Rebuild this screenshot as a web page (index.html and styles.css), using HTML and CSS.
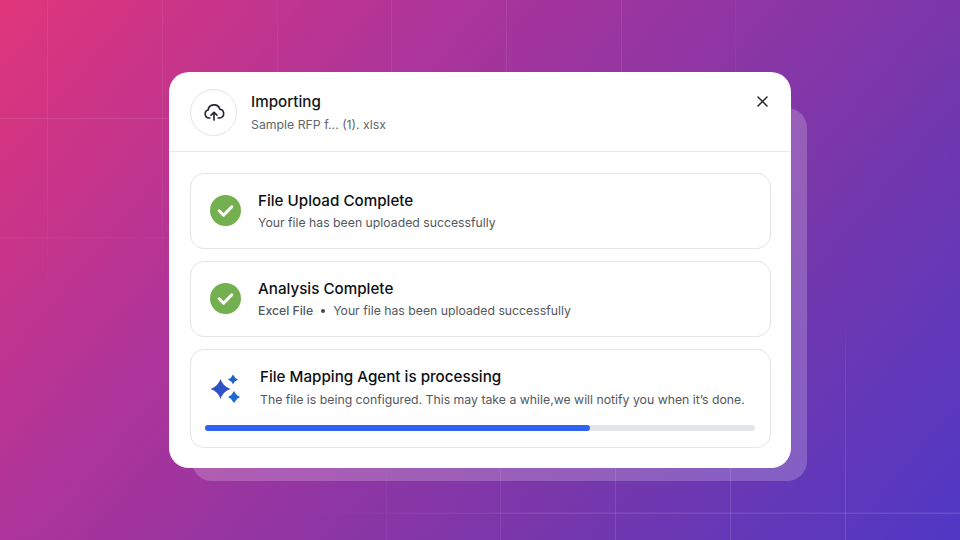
FILE: index.html
```html
<!DOCTYPE html>
<html lang="en">
<head>
<meta charset="utf-8">
<title>Importing</title>
<link rel="stylesheet" href="styles.css">
</head>
<body>
<div class="page">
	<svg class="grid" width="960" height="540" viewBox="0 0 960 540">
		<defs>
			<linearGradient id="fadeDown" x1="0" y1="0" x2="0" y2="1">
				<stop offset="0" stop-color="#fff" stop-opacity="0.07"/>
				<stop offset="0.6" stop-color="#fff" stop-opacity="0.06"/>
				<stop offset="1" stop-color="#fff" stop-opacity="0"/>
			</linearGradient>
			<linearGradient id="fadeUp" x1="0" y1="1" x2="0" y2="0">
				<stop offset="0" stop-color="#fff" stop-opacity="0.13"/>
				<stop offset="0.7" stop-color="#fff" stop-opacity="0.09"/>
				<stop offset="1" stop-color="#fff" stop-opacity="0"/>
			</linearGradient>
			<linearGradient id="fadeLeft" x1="1" y1="0" x2="0" y2="0">
				<stop offset="0" stop-color="#fff" stop-opacity="0.12"/>
				<stop offset="0.6" stop-color="#fff" stop-opacity="0.1"/>
				<stop offset="1" stop-color="#fff" stop-opacity="0"/>
			</linearGradient>
		</defs>
		<rect x="47" y="0" width="1" height="300" fill="url(#fadeDown)"/>
		<rect x="162" y="0" width="1" height="300" fill="url(#fadeDown)"/>
		<rect x="277" y="0" width="1" height="80" fill="#fff" fill-opacity="0.05"/>
		<rect x="391" y="0" width="1" height="80" fill="#fff" fill-opacity="0.08"/>
		<rect x="506" y="0" width="1" height="80" fill="#fff" fill-opacity="0.07"/>
		<rect x="621" y="0" width="1" height="80" fill="#fff" fill-opacity="0.07"/>
		<rect x="735" y="0" width="1" height="80" fill="#fff" fill-opacity="0.04"/>
		<rect x="0" y="118" width="175" height="1" fill="#fff" fill-opacity="0.09"/>
		<rect x="0" y="237" width="175" height="1" fill="#fff" fill-opacity="0.04"/>
		<rect x="386" y="460" width="1" height="80" fill="#fff" fill-opacity="0.04"/>
		<rect x="500" y="460" width="1" height="80" fill="#fff" fill-opacity="0.08"/>
		<rect x="615" y="460" width="1" height="80" fill="#fff" fill-opacity="0.1"/>
		<rect x="730" y="460" width="1" height="80" fill="#fff" fill-opacity="0.12"/>
		<rect x="845" y="315" width="1" height="225" fill="url(#fadeUp)"/>
		<rect x="300" y="512.500" width="660" height="1.500" fill="url(#fadeLeft)"/>
	</svg>
	<div class="back-card"></div>
	<div class="card">
		<div class="card-head">
			<div class="head-icon">
				<svg width="22" height="22" viewBox="0 0 24 24" fill="none" stroke="#23272e" stroke-width="1.8" stroke-linecap="round" stroke-linejoin="round">
					<path d="M7.500 18.500H6.800a4.400 4.400 0 0 1-1.300-8.600 6.600 6.600 0 0 1 12.900-.9 4.800 4.800 0 0 1 0 9.500h-1.900"/>
					<path d="M12 20.800v-8.300"/>
					<path d="M8.800 15.500 12 12.400l3.200 3.100"/>
				</svg>
			</div>
			<div class="head-text">
				<div class="head-title">Importing</div>
				<div class="head-sub">Sample RFP f... (1). xlsx</div>
			</div>
			<svg class="close" width="11" height="11" viewBox="0 0 11 11" fill="none" stroke="#23272e" stroke-width="1.500" stroke-linecap="round">
				<path d="M1 1l9 9M10 1 1 10"/>
			</svg>
		</div>
		<div class="card-body">
			<div class="step">
				<div class="step-row">
					<svg class="check" width="31" height="31" viewBox="0 0 31 31">
						<circle cx="15.500" cy="15.500" r="15.500" fill="#74b04f"/>
						<path d="M9.200 15.800l4.400 4.400 8.200-8.400" fill="none" stroke="#fff" stroke-width="3" stroke-linecap="round" stroke-linejoin="round"/>
					</svg>
					<div>
						<div class="step-title">File Upload Complete</div>
						<div class="step-sub">Your file has been uploaded successfully</div>
					</div>
				</div>
			</div>
			<div class="step">
				<div class="step-row">
					<svg class="check" width="31" height="31" viewBox="0 0 31 31">
						<circle cx="15.500" cy="15.500" r="15.500" fill="#74b04f"/>
						<path d="M9.200 15.800l4.400 4.400 8.200-8.400" fill="none" stroke="#fff" stroke-width="3" stroke-linecap="round" stroke-linejoin="round"/>
					</svg>
					<div>
						<div class="step-title">Analysis Complete</div>
						<div class="step-sub"><span class="file-type">Excel File</span><span class="dot"></span>Your file has been uploaded successfully</div>
					</div>
				</div>
			</div>
			<div class="step step-active">
				<div class="step-row">
					<svg class="sparkle" width="33" height="32" viewBox="0 0 33 32">
						<path d="M11.500 6Q14 13.500 21.500 16 14 18.500 11.500 26 9 18.500 1.500 16 9 13.500 11.500 6Z" fill="#2f51c4"/>
						<path d="M24 1.500Q25.500 5 29 6.500 25.500 8 24 11.500 22.500 8 19 6.500 22.500 5 24 1.500Z" fill="#1f63c8"/>
						<path d="M25 18Q26.800 22.200 31 24 26.800 25.800 25 30 23.200 25.800 19 24 23.200 22.200 25 18Z" fill="#1f6ad0"/>
					</svg>
					<div>
						<div class="step-title">File Mapping Agent is processing</div>
						<div class="step-sub">The file is being configured. This may take a while,we will notify you when it’s done.</div>
					</div>
				</div>
				<div class="progress"><div class="progress-fill" style="width: 70%"></div></div>
			</div>
		</div>
	</div>
</div>
</body>
</html>
```

FILE: styles.css
```css
* {
	box-sizing: border-box;
}
body {
	margin: 0;
	font-family: "Inter", "Liberation Sans", sans-serif;
}
.page {
	position: relative;
	width: 960px;
	height: 540px;
	overflow: hidden;
	display: flex;
	align-items: center;
	justify-content: center;
	background: linear-gradient(130deg, #e0357a 0%, #ad349a 32%, #7a37aa 68%, #4f38c4 100%);
}
.grid {
	position: absolute;
	left: 0;
	top: 0;
}
.back-card {
	position: absolute;
	left: 192px;
	top: 108px;
	width: 615px;
	height: 373px;
	border-radius: 20px;
	background: rgba(255, 255, 255, 0.2);
}
.card {
	position: relative;
	width: 622px;
	height: 396px;
	border-radius: 20px;
	background: #fff;
}
.card-head {
	display: flex;
	align-items: center;
	gap: 14px;
	height: 80px;
	padding: 0 20px 0 21px;
	border-bottom: 1.500px solid #e8eaeb;
}
.head-icon {
	display: flex;
	align-items: center;
	justify-content: center;
	width: 47px;
	height: 47px;
	margin-top: 1px;
	border: 1px solid #e2e3e5;
	border-radius: 50%;
}
.head-text {
	margin-top: 2px;
}
.head-title {
	font-size: 15.200px;
	font-weight: 500;
	line-height: 20px;
	color: #15171a;
}
.head-sub {
	margin-top: 4px;
	font-size: 12.300px;
	line-height: 18px;
	color: #62666c;
}
.close {
	align-self: flex-start;
	margin-left: auto;
	margin-right: 3.500px;
	margin-top: 24px;
}
.card-body {
	display: flex;
	flex-direction: column;
	gap: 12.500px;
	padding: 21px 20px 0 21px;
}
.step {
	height: 75.500px;
	padding: 0 19px;
	display: flex;
	flex-direction: column;
	justify-content: center;
	border: 1px solid #e3e5e7;
	border-radius: 14px;
}
.step-row {
	display: flex;
	align-items: center;
	gap: 17px;
}
.step-title {
	margin-top: 1px;
	font-size: 15.200px;
	font-weight: 500;
	line-height: 20px;
	color: #0d0f12;
}
.step-sub {
	margin-top: 3.500px;
	font-size: 12.250px;
	line-height: 18px;
	color: #54585e;
}
.file-type {
	font-weight: 500;
}
.dot {
	display: inline-block;
	width: 4px;
	height: 4px;
	margin: 0 8px;
	vertical-align: 2px;
	border-radius: 50%;
	background: #44484e;
}
.step-active {
	height: 98.500px;
	padding: 0 15px 0 14px;
	justify-content: flex-start;
}
.step-active .step-row {
	gap: 18px;
	margin-top: 17px;
}
.sparkle {
	flex: none;
	margin-left: 4px;
	margin-top: 2px;
}
.step-active .step-title {
	margin-top: 0;
}
.step-active .step-sub {
	margin-top: 3.500px;
	font-size: 12.270px;
}
.progress {
	height: 6px;
	margin-top: 16px;
	border-radius: 3px;
	background: #e2e6e8;
}
.progress-fill {
	height: 100%;
	border-radius: 3px;
	background: #2f62f2;
}
```
